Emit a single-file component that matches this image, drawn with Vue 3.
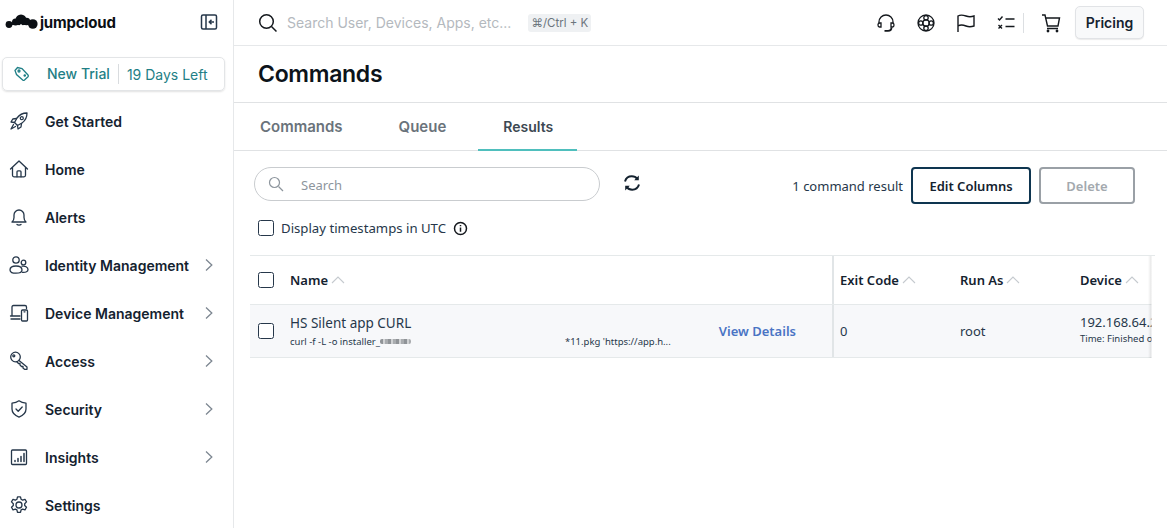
<script setup>
const navItems = [
  { label: 'Get Started', icon: 'rocket' },
  { label: 'Home', icon: 'home' },
  { label: 'Alerts', icon: 'bell' },
  { label: 'Identity Management', icon: 'users', arrow: true },
  { label: 'Device Management', icon: 'device', arrow: true },
  { label: 'Access', icon: 'key', arrow: true },
  { label: 'Security', icon: 'shield', arrow: true },
  { label: 'Insights', icon: 'chart', arrow: true },
  { label: 'Settings', icon: 'gear' },
]

const tabs = ['Commands', 'Queue', 'Results']
</script>

<template>
  <div class="layout">
    <aside class="sidebar">
      <div class="brand">
        <div class="logo">
          <svg width="33" height="16" viewBox="0 0 33 16">
            <circle cx="4" cy="10.500" r="3.400" fill="#0b0f14" />
            <circle cx="27.800" cy="10" r="4.800" fill="#0b0f14" />
            <circle cx="16" cy="6" r="5.500" fill="#0b0f14" />
            <circle cx="10.500" cy="8" r="3.500" fill="#0b0f14" />
            <circle cx="21.500" cy="7.500" r="3.800" fill="#0b0f14" />
            <path d="M4 8.500h24v2.500H4z" fill="#0b0f14" />
            <circle cx="16" cy="14" r="3" fill="#fff" />
            <circle cx="16" cy="11.500" r="1.200" fill="#fff" />
          </svg>
          <span>jumpcloud</span>
        </div>
        <svg class="collapse" width="18" height="18" viewBox="0 0 18 18" fill="none" stroke="#26374a" stroke-width="1.500">
          <rect x="1.500" y="2" width="15" height="14" rx="1.500" />
          <path d="M6 2v14M14 9H9.500M11.500 6.800 9.300 9l2.200 2.200" />
        </svg>
      </div>

      <div class="trial">
        <svg width="18" height="18" viewBox="0 0 18 18" fill="none" stroke="#1f7f86" stroke-width="1.300">
          <path d="M2 5.500 4.500 2.500 9 3.500l6 6.500c.6.700.5 1.300 0 1.800l-3.500 3.200c-.6.500-1.200.5-1.800 0L3.500 9.500z" />
          <circle cx="6" cy="6" r="1" />
          <path d="M10.500 10.500h2.500M11.750 9.300v2.500" />
        </svg>
        <span class="trial-name">New Trial</span>
        <span class="trial-days">19 Days Left</span>
      </div>

      <nav class="nav">
        <div v-for="item in navItems" :key="item.label" class="nav-item">
          <svg class="nav-icon" width="20" height="20" viewBox="0 0 20 20" fill="none" stroke="#26374a" stroke-width="1.300" stroke-linecap="round" stroke-linejoin="round">
            <template v-if="item.icon === 'rocket'">
              <path d="M18 2c-4 0-7.500 1.500-10 5l-2.500 4.500 3 3L13 12c3.500-2.500 5-6 5-10z" />
              <circle cx="12.800" cy="7.200" r="1.500" />
              <path d="M7.500 7.500 3.800 8 2 11l3.500.5M12.500 12.500 12 16l-3 2-.5-3.500M4.500 13.500 2 18l4.500-2.500" />
            </template>
            <template v-else-if="item.icon === 'home'">
              <path d="M1.500 10 10 2l8.500 8M3.500 8.500v7.800c0 .9.600 1.500 1.500 1.500h10c.9 0 1.500-.6 1.500-1.500V8.500" />
              <path d="M8 17.800v-5c0-.6.400-1 1-1h2c.6 0 1 .4 1 1v5" />
            </template>
            <template v-else-if="item.icon === 'bell'">
              <path d="M3 15h14c-1.200-1-2-2-2-4.500V8a5 5 0 0 0-10 0v2.500C5 13 4.200 14 3 15z" />
              <path d="M8 17.500c.8.700 3.200.7 4 0" />
            </template>
            <template v-else-if="item.icon === 'users'">
              <circle cx="7" cy="5" r="3.200" />
              <circle cx="14.500" cy="7.500" r="2.300" />
              <path d="M1 15c0-2.500 2.500-4 6-4s6 1.500 6 4-2.500 3.200-6 3.200S1 17.500 1 15z" />
              <path d="M13 11.200c3-.5 6 .8 6 3.300 0 2-2 3-5.500 2.800" />
            </template>
            <template v-else-if="item.icon === 'device'">
              <path d="M3 13V4c0-.8.500-1.500 1.500-1.500H16c.8 0 1.500.7 1.500 1.500v1.500M1.500 13H11M2 16h9" />
              <rect x="12.500" y="7" width="6" height="11" rx="1" />
              <path d="M15 8.800h1" />
            </template>
            <template v-else-if="item.icon === 'key'">
              <circle cx="6.500" cy="6" r="4.800" />
              <circle cx="4.800" cy="4.800" r="1" />
              <path d="M10 9.500l8 6.500v2.300h-2.500L14 17v-1.500h-1.500L11 14v-1.500H9.500L7.800 10.700" />
            </template>
            <template v-else-if="item.icon === 'shield'">
              <path d="M10 1.800c2 1.500 4.500 2.200 7 2.300v6c0 4-3 6.500-7 8-4-1.500-7-4-7-8v-6c2.500-.1 5-.8 7-2.300z" />
              <path d="M7 10l2.200 2.200L13.200 8" />
            </template>
            <template v-else-if="item.icon === 'chart'">
              <rect x="2.500" y="3" width="15" height="14.500" rx="1" />
              <path d="M6 14.500v-1M9 14.500v-3M12 14.500V9.500M15 14.500V6.500" stroke-width="1.500" />
            </template>
            <template v-else>
              <circle cx="10" cy="10" r="3" />
              <path d="M8.500 1.800h3l.6 2.500 1.500.8 2.400-.8 1.500 2.600-1.800 1.800v1.800l1.800 1.800-1.500 2.600-2.400-.8-1.500.8-.6 2.500h-3l-.6-2.500-1.500-.8-2.400.8-1.500-2.600 1.800-1.800V8.700L2.500 6.900 4 4.300l2.400.8 1.500-.8z" />
            </template>
          </svg>
          <span class="nav-label">{{ item.label }}</span>
          <svg v-if="item.arrow" class="nav-arrow" width="8" height="14" viewBox="0 0 8 14" fill="none" stroke="#7d8791" stroke-width="1.300">
            <path d="M1 1.500 6.800 7 1 12.500" />
          </svg>
        </div>
      </nav>
    </aside>

    <main class="main">
      <header class="topbar">
        <svg class="top-search" width="20" height="20" viewBox="0 0 20 20" fill="none" stroke="#14181d" stroke-width="1.500">
          <circle cx="8.500" cy="8.500" r="6.800" />
          <path d="m13.500 13.500 5 5" />
        </svg>
        <span class="global-search">Search User, Devices, Apps, etc...</span>
        <span class="shortcut">⌘/Ctrl + K</span>

        <div class="top-actions">
          <svg width="20" height="20" viewBox="0 0 20 20" fill="none" stroke="#14181d" stroke-width="1.300">
            <path d="M3 10.500V9a7 7 0 0 1 14 0v1.500" />
            <path d="M5 10H3.500C2.500 10 2 11 2 12s.5 2 1.500 2H5zM15 10h1.500c1 0 1.500 1 1.500 2s-.5 2-1.500 2H15z" />
            <path d="M15.500 14.500c0 2-1.500 3.300-3.500 3.300H8.500" stroke-width="1.800" />
          </svg>
          <svg width="20" height="20" viewBox="0 0 20 20" fill="none" stroke="#14181d" stroke-width="1.300">
            <circle cx="10" cy="10" r="8" />
            <circle cx="10" cy="10" r="3.200" />
            <circle cx="10" cy="4.800" r="2.200" />
            <circle cx="10" cy="15.200" r="2.200" />
            <circle cx="4.800" cy="10" r="2.200" />
            <circle cx="15.200" cy="10" r="2.200" />
          </svg>
          <svg width="20" height="20" viewBox="0 0 20 20" fill="none" stroke="#14181d" stroke-width="1.400">
            <path d="M2 19V3c2-1.200 4.500-1.200 8 0s5 1 8 0v10c-3 1-5 1.200-8 0s-6-1.200-8 0" />
          </svg>
          <svg width="20" height="20" viewBox="0 0 20 20" fill="none" stroke="#14181d" stroke-width="1.400">
            <path d="m2 5.500 1.500 1.500L6.500 3.500M2.500 12l3.500 3.500M6 12l-3.500 3.500M9.500 6h9M9.500 13.500h9" />
          </svg>
          <span class="top-sep"></span>
          <svg class="cart" width="20" height="20" viewBox="0 0 20 20" fill="none" stroke="#14181d" stroke-width="1.400">
            <path d="M1 2h3l2.500 11h10.500l1.500-8H5M6 15.500h11" />
            <circle cx="7" cy="18" r=".7" />
            <circle cx="16" cy="18" r=".7" />
          </svg>
          <button class="pricing">Pricing</button>
        </div>
      </header>

      <div class="page-title">
        <h1>Commands</h1>
      </div>

      <div class="tabs">
        <span v-for="tab in tabs" :key="tab" :class="['tab', { active: tab === 'Results' }]">{{ tab }}</span>
      </div>

      <section class="content">
        <div class="toolbar">
          <div class="search-box">
            <svg width="16" height="16" viewBox="0 0 16 16" fill="none" stroke="#8d959d" stroke-width="1.200">
              <circle cx="6.500" cy="6.500" r="5" />
              <path d="m10.500 10.500 4.500 4.500" />
            </svg>
            <span>Search</span>
          </div>
          <svg class="refresh" width="18" height="18" viewBox="0 0 18 18" fill="none" stroke="#14222f" stroke-width="2">
            <path d="M2 7.500C3 4 5.500 2.300 8.800 2.300c2.500 0 4.300 1 5.700 2.800M16 10.500c-1 3.500-3.500 5.200-6.800 5.200-2.500 0-4.300-1-5.700-2.800" />
            <path d="M15.800 1.500v4.700h-4.600zM2.200 16.500v-4.700h4.600z" fill="#14222f" stroke="none" />
          </svg>
          <span class="result-count">1 command result</span>
          <button class="btn btn-primary">Edit Columns</button>
          <button class="btn btn-disabled">Delete</button>
        </div>

        <label class="utc">
          <span class="check"></span>
          <span>Display timestamps in UTC</span>
          <svg width="15" height="15" viewBox="0 0 15 15" fill="none" stroke="#14181d" stroke-width="1.500">
            <circle cx="7.500" cy="7.500" r="6" />
            <path d="M7.500 6.500v4.200M7.500 4v1.300" />
          </svg>
        </label>

        <div class="table">
          <div class="cols head">
            <div class="cell name-cell">
              <span class="check"></span>
              <span class="th">Name</span>
              <svg class="sort" width="14" height="8" viewBox="0 0 14 8" fill="none" stroke="#c5cacf" stroke-width="1.100"><path d="M1 7l6-6 6 6" /></svg>
            </div>
            <div class="cell exit-cell"><span class="th">Exit Code</span><svg class="sort" width="14" height="8" viewBox="0 0 14 8" fill="none" stroke="#c5cacf" stroke-width="1.100"><path d="M1 7l6-6 6 6" /></svg></div>
            <div class="cell"><span class="th">Run As</span><svg class="sort" width="14" height="8" viewBox="0 0 14 8" fill="none" stroke="#c5cacf" stroke-width="1.100"><path d="M1 7l6-6 6 6" /></svg></div>
            <div class="cell"><span class="th">Device</span><svg class="sort" width="14" height="8" viewBox="0 0 14 8" fill="none" stroke="#c5cacf" stroke-width="1.100"><path d="M1 7l6-6 6 6" /></svg></div>
          </div>
          <div class="cols row">
            <div class="cell name-cell">
              <span class="check"></span>
              <div class="name-text">
                <div class="cmd-name">HS Silent app CURL</div>
                <div class="cmd-line">
                  <span>curl -f -L -o installer_</span><span class="smudge"></span><span class="cmd-end">*11.pkg 'https://app.h...</span>
                </div>
              </div>
              <a class="details">View Details</a>
            </div>
            <div class="cell exit-cell">0</div>
            <div class="cell">root</div>
            <div class="cell device-cell">
              <div class="device-ip">192.168.64.2</div>
              <div class="device-time">Time: Finished on</div>
            </div>
          </div>
          <div class="edge"></div>
        </div>
      </section>
    </main>
  </div>
</template>

<style>
html,
body {
  margin: 0;
  background: #fff;
  overflow: hidden;
}
</style>

<style scoped>
.layout {
  display: flex;
  width: 1167px;
  height: 528px;
  overflow: hidden;
  font-family: Inter, "Liberation Sans", sans-serif;
  color: #14222f;
  background: #fff;
}

.sidebar {
  width: 233px;
  flex-shrink: 0;
  border-right: 1px solid #e6e8ea;
}

.brand {
  display: flex;
  align-items: center;
  justify-content: space-between;
  height: 44px;
  padding: 0 15px 0 5px;
}

.logo {
  display: flex;
  align-items: center;
  gap: 2px;
  font-size: 15px;
  font-weight: 700;
  color: #0b0f14;
  letter-spacing: -0.2px;
}

.trial {
  display: flex;
  align-items: center;
  height: 32px;
  margin: 13px 8px 0 2px;
  padding-left: 10px;
  border: 1px solid #e3e5e7;
  border-radius: 5px;
  box-shadow: 0 1px 2px rgba(0, 0, 0, 0.12);
  font-size: 14px;
  color: #1f7f86;
}

.trial-name {
  margin-left: 16px;
  padding-right: 8px;
  font-weight: 500;
  border-right: 1px solid #d9dcdf;
  line-height: 20px;
}

.trial-days {
  margin-left: 8px;
}

.nav {
  margin-top: 6px;
}

.nav-item {
  display: flex;
  align-items: center;
  height: 48px;
  padding-left: 9px;
}

.nav-icon {
  flex-shrink: 0;
}

.nav-label {
  margin-left: 16px;
  font-size: 14px;
  font-weight: 600;
}

.nav-arrow {
  margin-left: auto;
  margin-right: 20px;
}

.main {
  flex: 1;
  min-width: 0;
}

.topbar {
  display: flex;
  align-items: center;
  height: 45px;
  padding: 0 23px 0 24px;
  border-bottom: 1px solid #e6e8ea;
}

.global-search {
  margin-left: 9px;
  font-size: 14px;
  color: #b4b9be;
}

.shortcut {
  margin-left: 17px;
  padding: 2px 3px;
  border-radius: 3px;
  background: #eff1f3;
  font-size: 11.500px;
  color: #6c757d;
}

.top-actions {
  display: flex;
  align-items: center;
  gap: 20px;
  margin-left: auto;
}

.top-sep {
  width: 1px;
  height: 20px;
  margin: 0 -11px 0 -13px;
  background: #dcdfe2;
}

.cart {
  margin-left: 8px;
}

.pricing {
  height: 33px;
  width: 69px;
  margin-left: -6px;
  border: 1px solid #e1e3e6;
  border-radius: 5px;
  background: #f8f9fa;
  box-shadow: 0 1px 1px rgba(0, 0, 0, 0.08);
  font-family: Inter, sans-serif;
  font-size: 14px;
  font-weight: 600;
  color: #14222f;
}

.page-title {
  box-sizing: border-box;
  height: 57px;
  border-bottom: 1px solid #e0e2e4;
  display: flex;
  align-items: center;
  padding-left: 24px;
}

h1 {
  margin: 0;
  font-size: 23px;
  font-weight: 600;
  color: #0c131a;
  letter-spacing: -0.3px;
}

.tabs {
  display: flex;
  height: 48px;
  box-sizing: border-box;
  border-bottom: 1px solid #e0e2e4;
  padding-left: 4px;
}

.tab {
  display: flex;
  align-items: center;
  padding: 0 22px;
  margin-right: 12px;
  font-size: 15px;
  font-weight: 600;
  color: #6a737b;
}

.tab.active {
  color: #3c4852;
  margin-left: -2px;
  padding: 0 24px 0 25px;
  height: 48px;
  box-sizing: border-box;
  border-bottom: 2px solid #4fbfbd;
  font-size: 14px;
}

.content {
  padding: 0 0 0 16px;
  font-family: "Noto Sans", "Open Sans", sans-serif;
}

.toolbar {
  display: flex;
  align-items: center;
  height: 37px;
  margin-top: 16px;
  padding: 0 32px 0 4px;
}

.search-box {
  display: flex;
  align-self: flex-start;
  align-items: center;
  width: 346px;
  height: 34px;
  box-sizing: border-box;
  padding-left: 13px;
  border: 1px solid #c9cccf;
  border-radius: 17px;
  font-size: 13px;
  color: #8d959d;
}

.search-box span {
  margin-left: 17px;
  padding-top: 1px;
}

.refresh {
  margin-left: 23px;
  margin-top: -5px;
}

.result-count {
  margin-left: auto;
  margin-right: 8px;
  font-size: 13px;
  color: #26374a;
}

.btn {
  height: 37px;
  box-sizing: border-box;
  border-radius: 4px;
  background: #fff;
  font-family: "Noto Sans", sans-serif;
  font-size: 13px;
  font-weight: 600;
}

.btn-primary {
  width: 120px;
  border: 2px solid #0e3550;
  color: #14222f;
}

.btn-disabled {
  width: 96px;
  margin-left: 8px;
  border: 2px solid #9aa0a6;
  color: #a3a9ae;
}

.utc {
  display: flex;
  align-items: center;
  height: 20px;
  margin-top: 14px;
  padding-left: 8px;
  font-size: 13.200px;
  color: #26374a;
}

.utc span:nth-child(2) {
  margin-left: 7px;
  margin-right: 7px;
}

.check {
  display: block;
  flex-shrink: 0;
  width: 14px;
  height: 14px;
  border: 1px solid #26374a;
  border-radius: 2.500px;
  background: #fff;
}

.table {
  position: relative;
  width: 905px;
  margin-top: 17px;
  overflow: hidden;
  border-top: 1px solid #e5e9ea;
  font-size: 13px;
}

.cols {
  display: grid;
  grid-template-columns: 582px 120px 120px 120px;
  align-items: stretch;
}

.head {
  height: 48px;
  border-bottom: 1px solid #e5e9ea;
}

.row {
  height: 52px;
  background: #f7f8fa;
  border-bottom: 1px solid #e5e9ea;
  color: #26374a;
}

.cell {
  display: flex;
  align-items: center;
  padding-left: 8px;
  min-width: 0;
  white-space: nowrap;
}

.name-cell > .check {
  margin-right: 16px;
}

.exit-cell {
  border-left: 2px solid #e1e5e7;
  padding-left: 6px;
}

.th {
  font-weight: 600;
  color: #14222f;
}

.sort {
  margin-left: 3px;
}

.name-text {
  flex: 1;
  min-width: 0;
}

.cmd-name {
  font-size: 13.500px;
  line-height: 18px;
  margin-top: -1px;
  color: #26374a;
}

.cmd-line {
  display: flex;
  align-items: center;
  margin-top: 4px;
  font-size: 9.500px;
  line-height: 12px;
  color: #26374a;
}

.smudge {
  width: 31px;
  height: 5px;
  background: repeating-linear-gradient(90deg, #8f9397 0 3px, #d0d2d4 3px 5px, #a9acaf 5px 8px);
  border-radius: 2px;
}

.cmd-end {
  margin-left: 154px;
}

.details {
  margin-right: 36px;
  margin-top: -1px;
  font-weight: 600;
  color: #4a74c4;
}

.device-cell {
  display: block;
  padding-top: 8px;
}

.device-ip {
  line-height: 18px;
}

.device-time {
  margin-top: 2px;
  font-size: 9.500px;
  line-height: 12px;
}

/* sticky-column shadow on the right side of the table */
.edge {
  position: absolute;
  top: 0;
  right: 0;
  bottom: 0;
  width: 7px;
  background: linear-gradient(90deg, rgba(0, 0, 0, 0) 0, rgba(0, 0, 0, 0.06) 2px, rgba(0, 0, 0, 0.09) 3px, #fff 4px);
}
</style>
